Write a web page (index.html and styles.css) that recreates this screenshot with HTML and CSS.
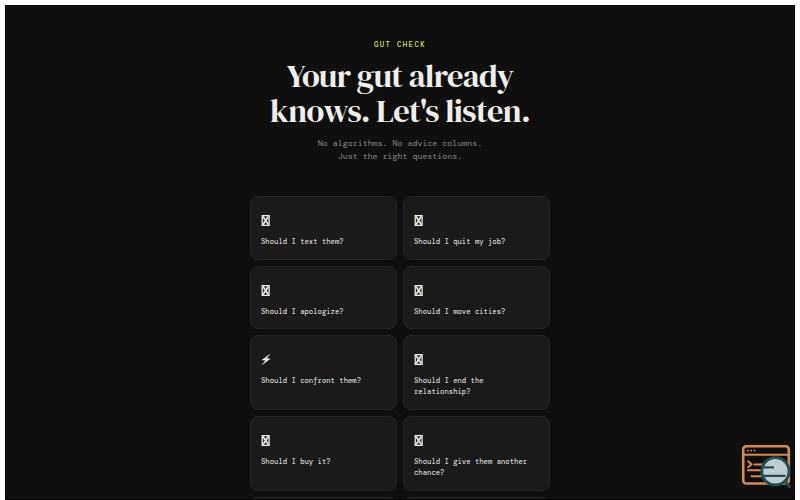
FILE: index.html
```html
<!DOCTYPE html>
<html lang="en">
<head>
    <meta charset="UTF-8">
    <meta name="viewport" content="width=device-width, initial-scale=1.0">
    <title>Gut Check</title>
    <link rel="stylesheet" href="styles.css">
</head>
<body>
    <svg class="defs" width="0" height="0">
        <symbol id="box" viewBox="0 0 9 11">
            <path d="M1.2.7h6.9v9.6H1.2z" fill="#302f2d" stroke="#eeebe4" stroke-width="1.3"/>
            <path d="M2 1.5l5.3 8M7.3 1.5l-5.3 8" stroke="#eeebe4" stroke-width="1.5"/>
        </symbol>
    </svg>

    <main class="page">
        <header>
            <div class="label">GUT CHECK</div>
            <h1>Your gut already<br>knows. Let's listen.</h1>
            <p>No algorithms. No advice columns.<br>Just the right questions.</p>
        </header>

        <div class="grid">
            <button class="card"><svg class="icon"><use href="#box"/></svg>Should I text them?</button>
            <button class="card"><svg class="icon"><use href="#box"/></svg>Should I quit my job?</button>
            <button class="card"><svg class="icon"><use href="#box"/></svg>Should I apologize?</button>
            <button class="card"><svg class="icon"><use href="#box"/></svg>Should I move cities?</button>
            <button class="card">
                <svg class="icon bolt" viewBox="0 0 10 12">
                    <path d="M9.2.4L.6 6.5l4 .3L1 11.6 9.6 5.2l-4-.3z" fill="#f0ede6" stroke="#f0ede6" stroke-width=".4"/>
                </svg>Should I confront them?
            </button>
            <button class="card"><svg class="icon"><use href="#box"/></svg>Should I end the relationship?</button>
            <button class="card"><svg class="icon"><use href="#box"/></svg>Should I buy it?</button>
            <button class="card"><svg class="icon"><use href="#box"/></svg>Should I give them another chance?</button>
            <button class="card"></button>
            <button class="card"></button>
        </div>
    </main>

    <!-- Floating inspect badge -->
    <svg class="badge" viewBox="0 0 50 46" fill="none" stroke-linecap="round">
        <rect x="2.2" y="2.2" width="45.6" height="37.3" rx="3" stroke="#d58b50" stroke-width="2.6"/>
        <path d="M2.5 10.8h45" stroke="#d58b50" stroke-width="2"/>
        <path d="M6.5 6.6h.5M9.9 6.6h.5M13.3 6.6h.5" stroke="#d58b50" stroke-width="1.6"/>
        <path d="M7.2 17.3l3.3 3-3.3 3" stroke="#d58b50" stroke-width="2"/>
        <path d="M13.5 20.5H25M7 26.3h15M10.5 32.2H24" stroke="#d58b50" stroke-width="2"/>
        <path d="M43.5 37.5l5 5" stroke="#204f52" stroke-width="3"/>
        <circle cx="34.4" cy="27.3" r="13.6" fill="#bfcdd2" stroke="#204f52" stroke-width="2.8"/>
        <path d="M22.5 23.4h9.5M23 31.8h20.5" stroke="#204f52" stroke-width="2.2"/>
    </svg>
</body>
</html>
```
FILE: styles.css
```css
* {
    box-sizing: border-box;
}
body {
    margin: 0;
    height: 500px;
    padding: 5px 5px 1px;
    background: #fff;
    color: #f0eeea;
    font-family: "DM Mono", "DejaVu Sans Mono", monospace;
    overflow: hidden;
}
.defs {
    display: block;
}
.page {
    height: 495px;
    padding-top: 34px;
    background: #0f0f0f;
    border: 1px solid #080808;
    border-bottom-color: #000;
    overflow: hidden;
}
header {
    text-align: center;
}
.label {
    height: 9px;
    line-height: 9px;
    font-size: 7.2px;
    font-weight: 500;
    letter-spacing: 0.2em;
    color: #d4e85a;
}
h1 {
    margin: 10px 0 0;
    font-family: "DM Serif Display", "Liberation Serif", serif;
    font-size: 32.6px;
    font-weight: normal;
    line-height: 34.5px;
    letter-spacing: -0.02em;
}
header p {
    margin: 9px 0 0;
    font-size: 8.3px;
    line-height: 13.3px;
    color: #888;
}
.grid {
    display: grid;
    grid-template-columns: 147px 147px;
    grid-template-rows: 64px 63px 75px 75px 63px;
    gap: 6px;
    justify-content: center;
    margin-top: 32px;
}
.card {
    display: flex;
    flex-direction: column;
    justify-content: flex-start;
    align-items: flex-start;
    padding: 18px 10px 0;
    background: #1a1a1a;
    border: 1px solid #242424;
    border-radius: 8px;
    color: #f0eeea;
    font-family: inherit;
    font-size: 7.25px;
    line-height: 11px;
    text-align: left;
}
.icon {
    width: 9px;
    height: 11px;
    margin-bottom: 10px;
    flex: none;
}
.bolt {
    width: 10px;
}
.badge {
    position: absolute;
    left: 741px;
    top: 444px;
    width: 50px;
    height: 46px;
}
```
